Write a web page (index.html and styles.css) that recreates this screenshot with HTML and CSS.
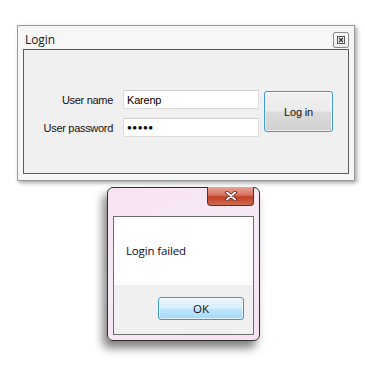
FILE: index.html
```html
<!DOCTYPE html>
<html>
<head>
<meta charset="utf-8">
<link rel="stylesheet" href="styles.css">
</head>
<body>
<div class="win login">
  <div class="titlebar">
    <span class="title">Login</span>
    <span class="close-sm"><svg width="8" height="8" viewBox="0 0 8 8"><rect x="0.5" y="0.5" width="7" height="7" fill="none" stroke="#555" stroke-width="1"/><path d="M2 2 L6 6 M6 2 L2 6" stroke="#333" stroke-width="1.2"/></svg></span>
  </div>
  <div class="panel">
    <div class="form">
      <div class="fields">
        <div class="row"><label>User name</label><div class="tb">Karenp</div></div>
        <div class="row"><label>User password</label><div class="tb pw">●●●●●</div></div>
      </div>
      <div class="btn-login">Log in</div>
    </div>
  </div>
</div>

<div class="win msg">
  <div class="msg-top">
    <div class="close-red"><svg width="14" height="10" viewBox="0 0 14 10"><path d="M3 1.5 L11 8.5 M11 1.5 L3 8.5" stroke="#5a1a12" stroke-width="3.6" stroke-linecap="round"/><path d="M3 1.5 L11 8.5 M11 1.5 L3 8.5" stroke="#fff" stroke-width="2" stroke-linecap="round"/></svg></div>
  </div>
  <div class="msg-panel">
    <div class="msg-body">Login failed</div>
    <div class="msg-foot"><div class="btn-ok">OK</div></div>
  </div>
</div>
</body>
</html>
```
FILE: styles.css
```css
html, body { margin: 0; padding: 0; background: #fff; }
body { width: 365px; height: 374px; position: relative; overflow: hidden; font-family: "Liberation Sans", Arial, sans-serif; }

.win { position: absolute; box-sizing: border-box; }

.login {
  left: 17px; top: 25px; width: 338px; height: 156px;
  border: 1px solid #9a9a9a;
  background: #f7f7f7;
  box-shadow: 2px 2px 4px rgba(0,0,0,0.35);
  padding: 0 5px 6px 5px;
  display: flex; flex-direction: column;
}
.titlebar {
  height: 23px; display: flex; align-items: center; justify-content: space-between;
}
.title {
  font-family: "Open Sans", "Noto Sans", sans-serif; font-size: 12px; color: #1a1a1a;
  margin-left: 2px; margin-top: 3px; letter-spacing: -0.1px;
}
.close-sm {
  width: 14px; height: 14px; border: 1px solid #8a8a8a; border-radius: 2px;
  background: linear-gradient(#fdfdfd, #ececec);
  display: flex; align-items: center; justify-content: center; margin-top: 4px; margin-right: 0px;
}
.panel {
  flex: 1; border: 1px solid #5e5e5e; background: #f0f0f0;
  padding: 40px 15px 0 9px;
}
.form { display: flex; align-items: flex-start; }
.fields { display: flex; flex-direction: column; gap: 9px; }
.row { display: flex; align-items: center; }
.row label {
  width: 80px; text-align: right; font-size: 11px; color: #111; margin-right: 10px; letter-spacing: -0.3px; white-space: nowrap;
}
.tb {
  width: 136px; height: 19px; box-sizing: border-box;
  border: 1px solid #dcdcdc; border-top-color: #cfcfcf; background: #fff;
  font-size: 11px; color: #000; padding: 3px 0 0 3px; letter-spacing: -0.2px;
}
.tb.pw { font-size: 8px; letter-spacing: 0.5px; padding-top: 4px; }
.btn-login {
  margin-left: 5px; margin-top: 1px;
  width: 69px; height: 41px; box-sizing: border-box;
  border: 1px solid #3c9bd4; border-radius: 3px;
  background: linear-gradient(#f1f1f1 0%, #ebebeb 48%, #dcdcdc 52%, #cfcfcf 100%);
  box-shadow: inset 0 0 0 1px rgba(255,255,255,0.7);
  display: flex; align-items: center; justify-content: center;
  font-size: 11px; color: #111; letter-spacing: -0.2px;
}

.msg {
  left: 107px; top: 187px; width: 153px; height: 154px;
  border: 1px solid #2f2f2f; border-radius: 6px;
  background: linear-gradient(160deg, #f8e2f4 0%, #f5ebf5 50%, #f7e1f2 100%);
  box-shadow: -4px 7px 10px rgba(0,0,0,0.5);
  padding: 0 5px 5px 5px;
  display: flex; flex-direction: column;
}
.msg-top { height: 28px; display: flex; justify-content: flex-end; }
.close-red {
  width: 47px; height: 19px; box-sizing: border-box; margin-top: -1px;
  border: 1px solid #6a2a22; border-top: none; border-radius: 0 0 4px 4px;
  background: linear-gradient(#e8a596 0%, #d7735f 45%, #c2402a 55%, #cf6a4e 100%);
  display: flex; align-items: center; justify-content: center;
}
.msg-panel {
  flex: 1; border: 1px solid #6c6c6c; background: #fff;
  display: flex; flex-direction: column;
}
.msg-body {
  height: 68px; box-sizing: border-box; padding: 26px 0 0 12px;
  font-family: "Open Sans", "Noto Sans", sans-serif; font-size: 11.5px; color: #0a0a2a; letter-spacing: -0.15px;
}
.msg-foot { flex: 1; background: #f0f0f0; display: flex; justify-content: flex-end; align-items: flex-start; padding: 12px 9px 0 0; }
.btn-ok {
  width: 86px; height: 23px; box-sizing: border-box;
  border: 1px solid #3c9bd4; border-radius: 3px;
  background: linear-gradient(#eaf6fd 0%, #d9f0fc 48%, #bee6fd 52%, #a7d9f5 100%);
  box-shadow: inset 0 0 0 1px rgba(255,255,255,0.6);
  display: flex; align-items: center; justify-content: center;
  font-family: "Open Sans", "Noto Sans", sans-serif; font-size: 11.5px; color: #111;
}
```
